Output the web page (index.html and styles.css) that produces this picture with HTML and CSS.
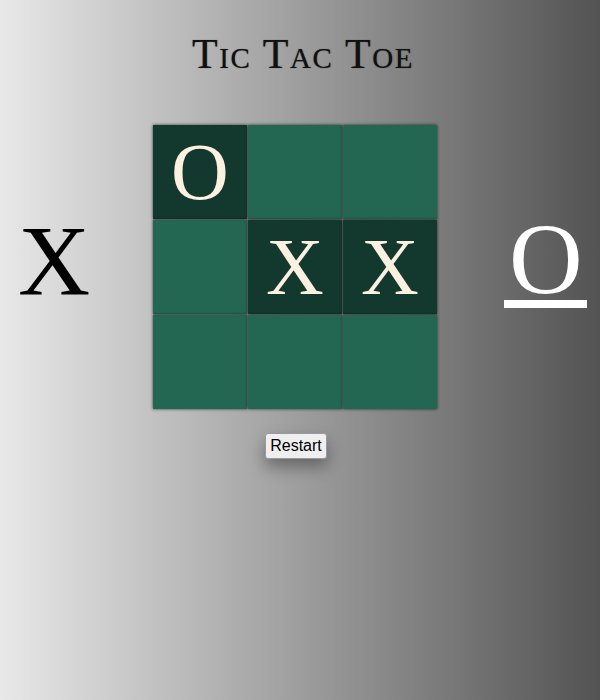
FILE: index.html
```html
<!DOCTYPE html>
<html>
<head>
<meta charset="utf-8">
<title>Tic Tac Toe</title>
<link rel="stylesheet" href="styles.css">
</head>
<body>
  <h1 class="title">Tic Tac Toe</h1>
  <div class="game">
    <div class="player player-x">X</div>
    <div class="board">
      <div class="cell filled">O</div>
      <div class="cell"></div>
      <div class="cell"></div>
      <div class="cell"></div>
      <div class="cell filled">X</div>
      <div class="cell filled">X</div>
      <div class="cell"></div>
      <div class="cell"></div>
      <div class="cell"></div>
    </div>
    <div class="player player-o active">O</div>
  </div>
  <div class="actions">
    <button class="restart">Restart</button>
  </div>
</body>
</html>
```
FILE: styles.css
```css
html, body {
  margin: 0;
  padding: 0;
  height: 100%;
}
body {
  background: linear-gradient(to right, #e8e8e8, #535353);
  font-family: "Liberation Serif", "Times New Roman", serif;
}
.title {
  margin: 0;
  padding-top: 33px;
  text-align: center;
  font-size: 42px;
  font-weight: normal;
  font-variant: small-caps;
  line-height: 42px;
  color: #111;
  padding-left: 6px;
  letter-spacing: 1.6px;
  text-shadow: 0 0 1px rgba(0,0,0,0.6);
}
.game {
  display: flex;
  align-items: center;
  margin-top: 50px;
}
.player {
  font-size: 100px;
  line-height: 100px;
  color: #000;
}
.player-x {
  margin-left: 18px;
  width: 72px;
  margin-top: -12px;
}
.player-o {
  margin-left: 67px;
  color: #fff;
  padding: 0 4px 0 5px;
  border-bottom: 8px solid #fff;
  line-height: 81px;
  margin-top: -7px;
  font-size: 102px;
}
.board {
  margin-left: 63px;
  display: grid;
  grid-template-columns: repeat(3, 94px);
  grid-auto-rows: 94px;
  gap: 1px;
  background: rgba(140,140,140,0.5);
}
.cell {
  background: #236651;
  box-shadow: 0 0 3px rgba(0,0,0,0.7);
  display: flex;
  align-items: center;
  justify-content: center;
  color: #fcf1e1;
  font-size: 80px;
  line-height: 1;
}
.cell.filled {
  background: #13392e;
}
.actions {
  display: flex;
  justify-content: center;
  margin-top: 24px;
  padding-right: 8px;
}
.restart {
  font-family: "Liberation Sans", Arial, sans-serif;
  font-size: 16px;
  padding: 3px 4px;
  background: #efefef;
  border: 1px solid #9a9a9a;
  border-radius: 3px;
  color: #000;
  box-shadow: 0 8px 16px rgba(0,0,0,0.35);
}
```
